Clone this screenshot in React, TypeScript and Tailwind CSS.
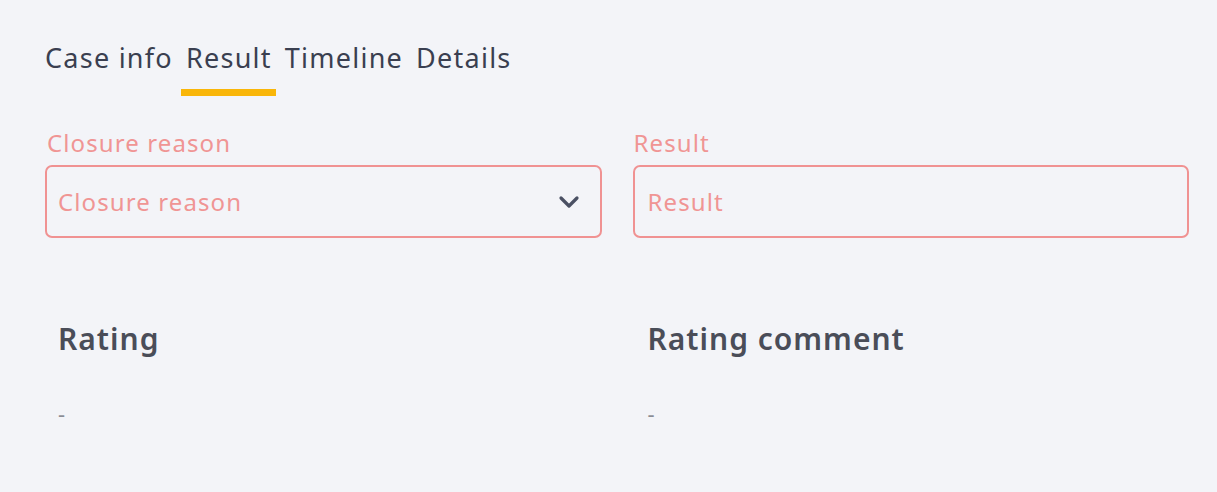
import React from "react";

const font = { fontFamily: '"Noto Sans", "Open Sans", sans-serif' };

function Chevron() {
  return (
    <svg width="22" height="14" viewBox="0 0 22 14" fill="none">
      <path d="M3 3 L11 11 L19 3" stroke="#4a5063" strokeWidth="3.2" strokeLinecap="round" strokeLinejoin="round" />
    </svg>
  );
}

export default function App() {
  const tabs = ["Case info", "Result", "Timeline", "Details"];
  return (
    <div className="min-h-screen w-full bg-[#f3f4f8] pt-[35px] pl-[40px] pr-[28px]" style={font}>
      <div className="flex gap-[4px]">
        {tabs.map((t) => (
          <div key={t} className="flex flex-col">
            <div className="pl-[5px] pr-[4px] text-[27px] leading-[46px] text-[#3a3f50] tracking-[1.25px]">{t}</div>
            <div className={"mt-[8px] h-[7px] " + (t === "Result" ? "bg-[#f9b609]" : "bg-transparent")} />
          </div>
        ))}
      </div>
      <div className="ml-[5px] mt-[29px] grid grid-cols-2 gap-[31px]">
        <div>
          <div className="pl-[2px] text-[24px] leading-[36px] tracking-[1.1px] text-[#f09594]">Closure reason</div>
          <div className="mt-[4px] flex h-[73px] items-center justify-between rounded-[7px] border-2 border-[#f09292] pl-[11px] pr-[20px]">
            <span className="text-[24px] tracking-[1.1px] text-[#f09594]">Closure reason</span>
            <Chevron />
          </div>
        </div>
        <div>
          <div className="pl-[1px] text-[24px] leading-[36px] tracking-[1.1px] text-[#f09594]">Result</div>
          <div className="mt-[4px] flex h-[73px] items-center rounded-[7px] border-2 border-[#f09292] pl-[13px]">
            <span className="text-[24px] tracking-[1.1px] text-[#f09594]">Result</span>
          </div>
        </div>
      </div>
      <div className="ml-[5px] mt-[81px] grid grid-cols-2 gap-[31px]">
        <div className="pl-[13px]">
          <div className="text-[30px] font-semibold leading-[40px] tracking-[1px] text-[#4a4d58]">Rating</div>
          <div className="mt-[43px] text-[22px] leading-[22px] text-[#8a8c94]">-</div>
        </div>
        <div className="pl-[15px]">
          <div className="text-[30px] font-semibold leading-[40px] tracking-[1px] text-[#4a4d58]">Rating comment</div>
          <div className="mt-[43px] text-[22px] leading-[22px] text-[#8a8c94]">-</div>
        </div>
      </div>
    </div>
  );
}
